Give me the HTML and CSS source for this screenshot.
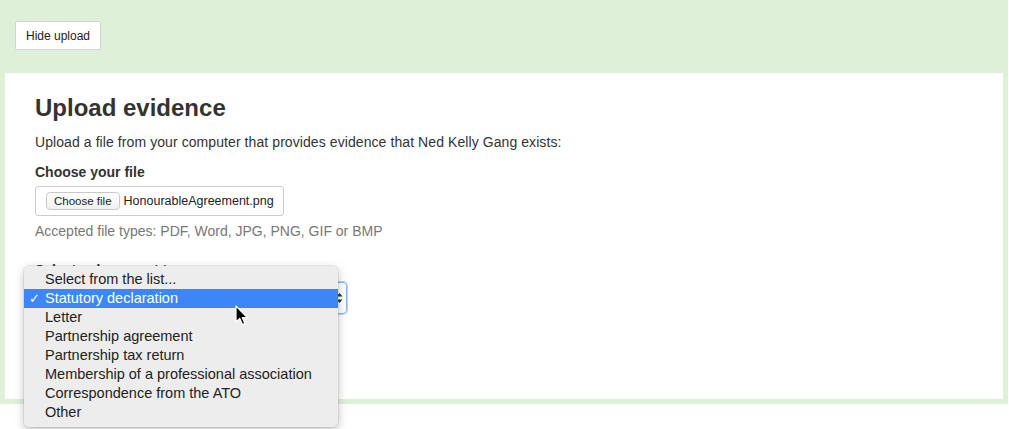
FILE: index.html
```html
<!DOCTYPE html>
<html lang="en">
<head>
<meta charset="utf-8">
<title>Upload evidence</title>
<link rel="stylesheet" href="styles.css">
</head>
<body>
<div class="panel">
  <button class="hide-btn" type="button">Hide upload</button>
  <div class="card">
    <h1 class="title">Upload evidence</h1>
    <p class="intro">Upload a file from your computer that provides evidence that Ned Kelly Gang exists:</p>
    <div class="label">Choose your file</div>
    <div class="file-box">
      <span class="file-btn">Choose file</span>
      <span class="file-name">HonourableAgreement.png</span>
    </div>
    <p class="hint">Accepted file types: PDF, Word, JPG, PNG, GIF or BMP</p>
    <div class="label label-select">Select a document type</div>
    <div class="select-wrap">
      <div class="select-box">
        <span class="arrows">
          <svg width="7" height="12" viewBox="0 0 7 12"><path d="M0.5 4.5 L3.5 1 L6.5 4.5 Z M0.5 7.5 L3.5 11 L6.5 7.5 Z" fill="#333"/></svg>
        </span>
      </div>
      <ul class="menu">
        <li class="item">Select from the list...</li>
        <li class="item selected"><span class="check">✓</span>Statutory declaration</li>
        <li class="item">Letter</li>
        <li class="item">Partnership agreement</li>
        <li class="item">Partnership tax return</li>
        <li class="item">Membership of a professional association</li>
        <li class="item">Correspondence from the ATO</li>
        <li class="item">Other</li>
      </ul>
      <svg class="cursor" width="14" height="22" viewBox="0 0 14 22"><path d="M1 1 L1 17 L4.8 13.4 L7.4 19.6 L9.8 18.6 L7.3 12.6 L12.3 12.6 Z" fill="#000" stroke="#fff" stroke-width="1.2" stroke-linejoin="round"/></svg>
    </div>
  </div>
</div>
</body>
</html>
```
FILE: styles.css
```css
* { box-sizing: border-box; }
html, body { margin: 0; padding: 0; background: #fff; }
body {
  font-family: "Liberation Sans", Arial, Helvetica, sans-serif;
  color: #333;
  font-size: 14px;
  min-height: 429px;
}
.panel {
  background: #dff0d8;
  padding: 21px 5px 5px 5px;
  width: 1008px;
  height: 404px;
  display: flex;
  flex-direction: column;
  align-items: flex-start;
}
.hide-btn {
  margin-left: 10px;
  height: 29px;
  width: 86px;
  padding: 0;
  background: #fff;
  border: 1px solid #d4d4d4;
  border-radius: 2px;
  font-family: "Liberation Sans", Arial, sans-serif;
  font-size: 12px;
  color: #222;
}
.card {
  margin-top: 23px;
  background: #fff;
  width: 998px;
  flex: 1;
  padding: 20px 30px 0 30px;
  position: relative;
  z-index: 1;
}
.title {
  margin: 0;
  font-size: 24px;
  line-height: 30px;
  font-weight: bold;
  color: #333;
}
.intro {
  margin: 9px 0 0 0;
  line-height: 20px;
  font-size: 14px;
  letter-spacing: 0.08px;
}
.label {
  margin-top: 10px;
  font-weight: bold;
  line-height: 20px;
  font-size: 14px;
}
.file-box {
  margin-top: 4px;
  width: 249px;
  height: 30px;
  border: 1px solid #ccc;
  border-radius: 3px;
  display: flex;
  align-items: center;
  padding-left: 10px;
  gap: 4px;
}
.file-btn {
  font-size: 11.5px;
  height: 18px;
  line-height: 16px;
  padding: 0 7px;
  border: 1px solid #c8c8c8;
  border-radius: 4px;
  background: linear-gradient(#fff, #f1f1f1);
  color: #222;
}
.file-name {
  font-size: 12.5px;
  color: #222;
}
.hint {
  margin: 5px 0 0 0;
  color: #777;
  line-height: 20px;
  font-size: 14px;
}
.label-select { margin-top: 19px; }
.select-wrap {
  position: relative;
  margin-top: 2px;
  width: 312px;
}
.select-box {
  width: 312px;
  height: 32px;
  border: 1px solid #8cb6f0;
  border-radius: 4px;
  box-shadow: 0 0 0 1px #b9d3f7;
  display: flex;
  justify-content: flex-end;
  align-items: center;
  padding-right: 3px;
}
.arrows { display: flex; }
.menu {
  position: absolute;
  left: -11px;
  top: -16px;
  width: 314px;
  margin: 0;
  padding: 4px 0 5px 0;
  list-style: none;
  background: #ededed;
  border-radius: 5px;
  box-shadow: 0 3px 10px rgba(0,0,0,0.25), 0 0 0 1px rgba(0,0,0,0.06);
}
.item {
  height: 19px;
  line-height: 19px;
  padding-left: 21px;
  font-size: 14.5px;
  color: #222;
  position: relative;
  white-space: nowrap;
}
.item.selected {
  background: #3c87f5;
  color: #fff;
}
.check {
  position: absolute;
  left: 5px;
  top: 0;
  font-size: 13px;
}
.cursor {
  position: absolute;
  left: 200px;
  top: 23px;
}
```
